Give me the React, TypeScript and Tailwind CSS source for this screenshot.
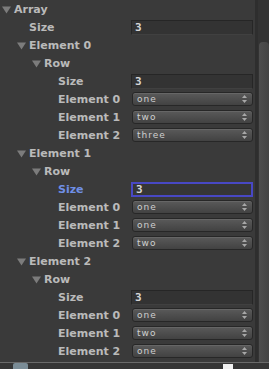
import React from "react";

type Row = {
  level: number;
  label: string;
  arrow?: boolean;
  field?: string;
  popup?: string;
  selected?: boolean;
};

const rows: Row[] = [
  { level: 0, label: "Array", arrow: true },
  { level: 1, label: "Size", field: "3" },
  { level: 1, label: "Element 0", arrow: true },
  { level: 2, label: "Row", arrow: true },
  { level: 3, label: "Size", field: "3" },
  { level: 3, label: "Element 0", popup: "one" },
  { level: 3, label: "Element 1", popup: "two" },
  { level: 3, label: "Element 2", popup: "three" },
  { level: 1, label: "Element 1", arrow: true },
  { level: 2, label: "Row", arrow: true },
  { level: 3, label: "Size", field: "3", selected: true },
  { level: 3, label: "Element 0", popup: "one" },
  { level: 3, label: "Element 1", popup: "one" },
  { level: 3, label: "Element 2", popup: "two" },
  { level: 1, label: "Element 2", arrow: true },
  { level: 2, label: "Row", arrow: true },
  { level: 3, label: "Size", field: "3" },
  { level: 3, label: "Element 0", popup: "one" },
  { level: 3, label: "Element 1", popup: "two" },
  { level: 3, label: "Element 2", popup: "one" },
];

const padClass = ["pl-[2px]", "pl-[17px]", "pl-[32px]", "pl-[46px]"];

function Triangle() {
  return (
    <svg width="12" height="18" viewBox="0 0 12 18" className="shrink-0">
      <polygon points="0,6.5 9,6.5 4.5,13.5" fill="#7c7c7c" />
    </svg>
  );
}

function Arrows() {
  return (
    <svg width="5" height="8" viewBox="0 0 5 8" className="shrink-0">
      <polygon points="2.5,0 5,3 0,3" fill="#a8a8a8" />
      <polygon points="0,5 5,5 2.5,8" fill="#a8a8a8" />
    </svg>
  );
}

function RowView({ r }: { r: Row }) {
  return (
    <div className="flex h-[18px] items-center">
      <div className={`flex h-full w-[131px] shrink-0 items-center ${padClass[r.level]}`}>
        <div className="w-[12px] shrink-0">{r.arrow ? <Triangle /> : null}</div>
        <span
          className={`text-[11px] font-bold leading-none whitespace-nowrap ${
            r.selected ? "text-[#6f8fe6]" : "text-[#bababa]"
          }`}
          style={{ fontFamily: '"DejaVu Sans", sans-serif' }}
        >
          {r.label}
        </span>
      </div>
      <div className="flex h-full w-[122px] shrink-0 items-center">
        {r.field !== undefined ? (
          <div
            className={`flex h-[15px] w-full items-center px-[3px] ${
              r.selected
                ? "border-2 border-[#4848c4] bg-[#363636]"
                : "border border-[#262626] border-b-[#404040] bg-[#333333]"
            }`}
          >
            <span
              className="text-[11px] font-bold leading-none text-[#d6d6d6]"
              style={{ fontFamily: '"DejaVu Sans Mono", monospace' }}
            >
              {r.field}
            </span>
          </div>
        ) : null}
        {r.popup !== undefined ? (
          <div className="ml-[1px] flex h-[14px] w-full items-center justify-between rounded-[3px] border border-[#272727] bg-gradient-to-b from-[#5a5a5a] to-[#424242] pl-[4px] pr-[5px] shadow-[inset_0_1px_0_#666666]">
            <span
              className="text-[9px] leading-none tracking-[1px] text-[#cfcfcf]"
              style={{ fontFamily: '"DejaVu Sans", sans-serif' }}
            >
              {r.popup}
            </span>
            <Arrows />
          </div>
        ) : null}
      </div>
    </div>
  );
}

export default function App() {
  return (
    <div className="flex h-[369px] w-[269px] flex-col overflow-hidden bg-[#3a3a3a]">
      <div className="flex h-[362px] shrink-0">
        <div className="flex w-[255px] shrink-0 flex-col">
          {rows.map((r, i) => (
            <RowView key={i} r={r} />
          ))}
        </div>
        <div className="flex w-[14px] shrink-0 flex-col border-l-[3px] border-[#2e2e2e] bg-[#333333] pt-[42px]">
          <div className="ml-[1px] flex-1 rounded-t-[4px] bg-gradient-to-r from-[#4e4e4e] to-[#444444]" />
        </div>
      </div>
      <div className="h-[1px] shrink-0 bg-[#6a6a6a]" />
      <div className="relative flex flex-1 items-end bg-[#353535]">
        <div className="ml-[13px] h-[6px] w-[15px] rounded-t-[2px] bg-[#7a8c96]" />
        <div className="ml-auto mr-[36px] h-[5px] w-[10px] bg-[#f0f0f0]" />
      </div>
    </div>
  );
}
